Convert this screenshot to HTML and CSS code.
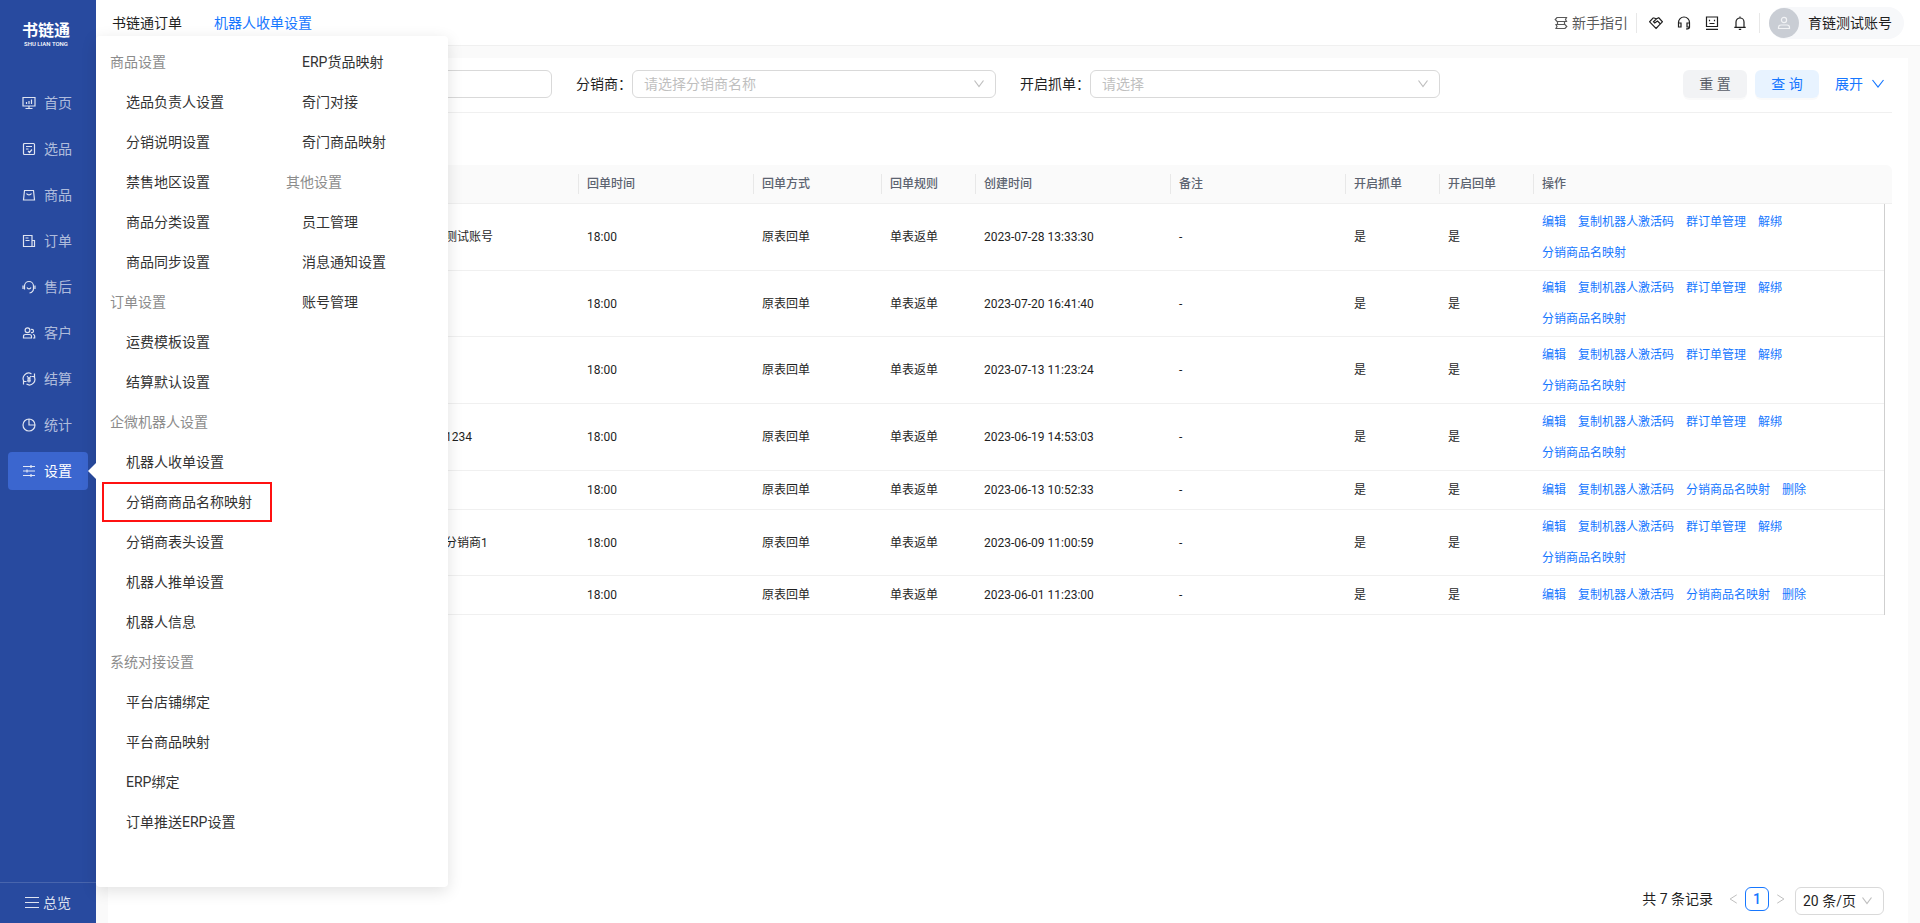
FILE: index.html
```html
<!DOCTYPE html>
<html lang="zh-CN">
<head>
<meta charset="utf-8">
<title>机器人收单设置</title>
<link rel="stylesheet" href="styles.css">
</head>
<body>
<div class="app">
  <aside class="sidebar">
    <div class="logo">
      <span class="logo-name">书链通</span>
      <span class="logo-sub">SHU LIAN TONG</span>
    </div>
    <nav class="side-nav">
      <a class="side-item" href="#"><svg class="icon" viewBox="0 0 14 14"><path d="M1 1.500h12v8.500H1zM3.500 12.500h7M7 10v2.500M4.500 8V6M7 8V5M9.500 8V3.500"/></svg>首页</a>
      <a class="side-item" href="#"><svg class="icon" viewBox="0 0 14 14"><rect x="1.500" y="1.500" width="11" height="11" rx="1"/><path d="M4 4.500h6M4 7h2.500M6 9l1.500 1.500L10 7.500"/></svg>选品</a>
      <a class="side-item" href="#"><svg class="icon" viewBox="0 0 14 14"><path d="M2.500 2.500h9l1 9.500h-11zM4.500 5.500c1 1.800 4 1.800 5 0"/></svg>商品</a>
      <a class="side-item" href="#"><svg class="icon" viewBox="0 0 14 14"><path d="M1.500 1.500h8.500v11H1.500zM10 6.500h2.500v6H10M3.500 4h3M3.500 6.500h4"/></svg>订单</a>
      <a class="side-item" href="#"><svg class="icon" viewBox="0 0 14 14"><path d="M2.500 9.500V6a4.500 4.500 0 0 1 9 0v2.500c0 2.500-1.500 4-4 4.500M1 5.500v3.500M13 5.500v3.500M5 7.500c.8 1.700 3.200 1.700 4 0"/></svg>售后</a>
      <a class="side-item" href="#"><svg class="icon" viewBox="0 0 14 14"><circle cx="5.500" cy="4.200" r="2.400"/><path d="M1.500 12V10.500q0-2 2-2h4q2 0 2 2V12zM9 3.500a1.700 1.700 0 1 1 0 3M11 8.500q1.700 0 1.700 2V12H11"/></svg>客户</a>
      <a class="side-item" href="#"><svg class="icon" viewBox="0 0 14 14"><path d="M9.500 1.900A5.500 5.500 0 0 0 2.200 9.800M4.500 12.100A5.500 5.500 0 0 0 11.800 4.200M12.500 1.500v3h-3M1.500 12.500v-3h3M5 4l2 2.500L9 4M7 6.500V10.500M5 7h4M5 8.800h4"/></svg>结算</a>
      <a class="side-item" href="#"><svg class="icon" viewBox="0 0 14 14"><circle cx="7" cy="7" r="6"/><path d="M7 1v6h6"/></svg>统计</a>
      <a class="side-item active" href="#"><svg class="icon" viewBox="0 0 14 14"><path d="M1 2.500h12M1 7h12M1 11.500h12M9 1v3M5 5.500v3M9 10v3"/></svg>设置</a>
    </nav>
    <a class="overview" href="#"><svg class="icon" viewBox="0 0 14 14"><path d="M0 1.500h14M0 6.500h14M0 11.500h14"/></svg>总览</a>
  </aside>

  <div class="page">
    <header class="topbar">
      <nav class="tabs">
        <a class="tab" href="#">书链通订单</a>
        <a class="tab current" href="#">机器人收单设置</a>
      </nav>
      <div class="tools">
        <a class="guide" href="#"><svg class="icon" viewBox="0 0 14 14"><path d="M3 1.500h9.500L11.500 3.500l1 2H3L1.200 3.500zM2 8.500h9l1.800 2-1.800 2H2l1-2zM3.500 5.500v3M10.500 5.500v3"/></svg>新手指引</a>
        <div class="tool-icons">
          <button class="tool" aria-label="合作"><svg class="icon" viewBox="0 0 14 14"><path d="M4.200 1.800.6 5.800 7 12.500l6.400-6.700L9.800 1.800 7.500 2.800 4.500 5.800l1.200 1.200L8.500 5l3 3M4.200 1.800l3 1M7 12.500l2.500-2.700"/></svg></button>
          <button class="tool" aria-label="客服"><svg class="icon" viewBox="0 0 14 14"><path d="M1.500 10V6.500a5.500 5.500 0 0 1 11 0V10M1.500 7h2.500v4H1.500zM10 7h2.500v4H10zM12.500 11q0 2-3.500 2"/></svg></button>
          <button class="tool" aria-label="反馈"><svg class="icon" viewBox="0 0 14 14"><path d="M1.500 1h11v9.500h-11zM1 13.300h12M4.500 3.800v1.500M9.500 3.800v1.500M4.500 7.500h5"/></svg></button>
          <button class="tool" aria-label="通知"><svg class="icon" viewBox="0 0 14 14"><path d="M3 11V6a4 4 0 0 1 8 0v5M1.300 11.300h11.400M7 .5V2M5.800 13.300h2.400"/></svg></button>
        </div>
        <button class="account"><span class="avatar"><svg class="icon" viewBox="0 0 14 14"><circle cx="7" cy="4" r="2.600"/><path d="M1.500 12.500v-1q0-2.500 2.500-2.500h6q2.500 0 2.500 2.500v1z"/></svg></span>育链测试账号</button>
      </div>
    </header>

    <main class="card">
      <form class="filters">
        <div class="field"><input class="box" type="text" aria-label="名称"></div>
        <div class="field">
          <label for="dealer">分销商：</label>
          <div class="select-wrap"><select class="box" id="dealer"><option>请选择分销商名称</option></select><svg class="icon chevron" viewBox="0 0 12 12"><path d="M1.500 2.500 6 8.500l4.500-6"/></svg></div>
        </div>
        <div class="field">
          <label for="grab">开启抓单：</label>
          <div class="select-wrap"><select class="box" id="grab"><option>请选择</option></select><svg class="icon chevron" viewBox="0 0 12 12"><path d="M1.500 2.500 6 8.500l4.500-6"/></svg></div>
        </div>
        <div class="actions">
          <button class="btn" type="reset">重 置</button>
          <button class="btn primary" type="button">查 询</button>
          <button class="expand" type="button">展开<svg class="icon" viewBox="0 0 12 12"><path d="M.5 2 6 9l5.500-7"/></svg></button>
        </div>
      </form>

      <table class="orders">
        <colgroup>
          <col class="c-lead"><col class="c-name"><col class="c-wide"><col class="c-mode"><col class="c-flag"><col class="c-date"><col class="c-wide"><col class="c-flag"><col class="c-flag"><col><col class="c-gutter">
        </colgroup>
        <thead>
          <tr><th></th><th></th><th>回单时间</th><th>回单方式</th><th>回单规则</th><th>创建时间</th><th>备注</th><th>开启抓单</th><th>开启回单</th><th>操作</th><th></th></tr>
        </thead>
        <tbody>
          <tr><td></td><td>育链测试账号</td><td>18:00</td><td>原表回单</td><td>单表返单</td><td>2023-07-28 13:33:30</td><td>-</td><td>是</td><td>是</td><td><div class="links"><a href="#">编辑</a><a href="#">复制机器人激活码</a><a href="#">群订单管理</a><a href="#">解绑</a><a href="#">分销商品名映射</a></div></td><td></td></tr>
          <tr><td></td><td></td><td>18:00</td><td>原表回单</td><td>单表返单</td><td>2023-07-20 16:41:40</td><td>-</td><td>是</td><td>是</td><td><div class="links"><a href="#">编辑</a><a href="#">复制机器人激活码</a><a href="#">群订单管理</a><a href="#">解绑</a><a href="#">分销商品名映射</a></div></td><td></td></tr>
          <tr><td></td><td></td><td>18:00</td><td>原表回单</td><td>单表返单</td><td>2023-07-13 11:23:24</td><td>-</td><td>是</td><td>是</td><td><div class="links"><a href="#">编辑</a><a href="#">复制机器人激活码</a><a href="#">群订单管理</a><a href="#">解绑</a><a href="#">分销商品名映射</a></div></td><td></td></tr>
          <tr><td></td><td>测试1234</td><td>18:00</td><td>原表回单</td><td>单表返单</td><td>2023-06-19 14:53:03</td><td>-</td><td>是</td><td>是</td><td><div class="links"><a href="#">编辑</a><a href="#">复制机器人激活码</a><a href="#">群订单管理</a><a href="#">解绑</a><a href="#">分销商品名映射</a></div></td><td></td></tr>
          <tr class="short"><td></td><td></td><td>18:00</td><td>原表回单</td><td>单表返单</td><td>2023-06-13 10:52:33</td><td>-</td><td>是</td><td>是</td><td><div class="links"><a href="#">编辑</a><a href="#">复制机器人激活码</a><a href="#">分销商品名映射</a><a href="#">删除</a></div></td><td></td></tr>
          <tr><td></td><td>测试分销商1</td><td>18:00</td><td>原表回单</td><td>单表返单</td><td>2023-06-09 11:00:59</td><td>-</td><td>是</td><td>是</td><td><div class="links"><a href="#">编辑</a><a href="#">复制机器人激活码</a><a href="#">群订单管理</a><a href="#">解绑</a><a href="#">分销商品名映射</a></div></td><td></td></tr>
          <tr class="short"><td></td><td></td><td>18:00</td><td>原表回单</td><td>单表返单</td><td>2023-06-01 11:23:00</td><td>-</td><td>是</td><td>是</td><td><div class="links"><a href="#">编辑</a><a href="#">复制机器人激活码</a><a href="#">分销商品名映射</a><a href="#">删除</a></div></td><td></td></tr>
        </tbody>
      </table>

      <footer class="pager">
        <span class="total">共 7 条记录</span>
        <button class="step" aria-label="上一页"><svg class="icon" viewBox="0 0 12 12"><path d="M10.500 1 2.500 6l8 5"/></svg></button>
        <button class="page-no">1</button>
        <button class="step" aria-label="下一页"><svg class="icon" viewBox="0 0 12 12"><path d="m1.500 1 8 5-8 5"/></svg></button>
        <div class="select-wrap size"><select class="box" aria-label="每页条数"><option>20 条/页</option></select><svg class="icon chevron" viewBox="0 0 12 12"><path d="M1.500 2.500 6 8.500l4.500-6"/></svg></div>
      </footer>
    </main>
  </div>

  <div class="flyout">
    <ul class="menu">
      <li class="group">商品设置</li>
      <li><a href="#">选品负责人设置</a></li>
      <li><a href="#">分销说明设置</a></li>
      <li><a href="#">禁售地区设置</a></li>
      <li><a href="#">商品分类设置</a></li>
      <li><a href="#">商品同步设置</a></li>
      <li class="group">订单设置</li>
      <li><a href="#">运费模板设置</a></li>
      <li><a href="#">结算默认设置</a></li>
      <li class="group">企微机器人设置</li>
      <li><a href="#">机器人收单设置</a></li>
      <li class="marked"><a href="#">分销商商品名称映射</a></li>
      <li><a href="#">分销商表头设置</a></li>
      <li><a href="#">机器人推单设置</a></li>
      <li><a href="#">机器人信息</a></li>
      <li class="group">系统对接设置</li>
      <li><a href="#">平台店铺绑定</a></li>
      <li><a href="#">平台商品映射</a></li>
      <li><a href="#">ERP绑定</a></li>
      <li><a href="#">订单推送ERP设置</a></li>
    </ul>
    <ul class="menu">
      <li><a href="#">ERP货品映射</a></li>
      <li><a href="#">奇门对接</a></li>
      <li><a href="#">奇门商品映射</a></li>
      <li class="group">其他设置</li>
      <li><a href="#">员工管理</a></li>
      <li><a href="#">消息通知设置</a></li>
      <li><a href="#">账号管理</a></li>
    </ul>
  </div>
</div>
</body>
</html>
```
FILE: styles.css
```css
* { box-sizing: border-box; }

body {
  margin: 0;
  background: #fafafa;
  color: #1f1f1f;
  font: 14px/20px Roboto, "Noto Sans CJK SC", sans-serif;
}

a { color: inherit; text-decoration: none; }

button, input, select { font: inherit; color: inherit; }

button { border: 0; padding: 0; background: none; cursor: pointer; }

.icon {
  width: 14px;
  height: 14px;
  flex: none;
  fill: none;
  stroke: currentColor;
  stroke-width: 1.2;
}

.app { position: relative; display: flex; min-height: 100vh; }

/* Sidebar */
.sidebar {
  width: 96px;
  flex: none;
  display: flex;
  flex-direction: column;
  background: #284a9f;
  color: #fff;
}

.logo {
  height: 84px;
  padding: 21px 4px 0 0;
  display: flex;
  flex-direction: column;
  align-items: center;
}

.logo-name { font-size: 16px; font-weight: 700; line-height: 20px; }
.logo-sub { font-size: 6px; font-weight: 500; line-height: 6px; }

.side-nav { display: flex; flex-direction: column; gap: 8px; padding: 0 8px; }

.side-item {
  height: 38px;
  padding-left: 14px;
  display: flex;
  align-items: center;
  gap: 8px;
  border-radius: 4px;
  color: rgba(255, 255, 255, 0.65);
}

.side-item .icon { color: rgba(255, 255, 255, 0.85); }

.side-item.active { position: relative; background: #3b66cf; color: #fff; }

.side-item.active::after {
  content: "";
  position: absolute;
  z-index: 3;
  right: -8px;
  top: 11px;
  border: 8px solid transparent;
  border-left-width: 0;
  border-right-color: #fff;
}

.overview {
  height: 41px;
  margin-top: auto;
  padding-left: 25px;
  display: flex;
  align-items: center;
  gap: 4px;
  border-top: 1px solid rgba(255, 255, 255, 0.15);
  color: rgba(255, 255, 255, 0.85);
}

/* Header */
.page { flex: 1; min-width: 0; display: flex; flex-direction: column; }

.topbar {
  height: 46px;
  padding: 0 16px;
  display: flex;
  align-items: center;
  justify-content: space-between;
  border-bottom: 1px solid #f0f0f0;
  background: #fff;
}

.tabs { display: flex; gap: 32px; }
.current { color: #1677ff; }

.tools { display: flex; align-items: center; }
.guide { display: flex; align-items: center; gap: 4px; padding-right: 8px; color: #595959; }

.tool-icons {
  height: 20px;
  padding: 0 12px;
  display: flex;
  align-items: center;
  gap: 14px;
  border: solid #e8e8e8;
  border-width: 0 1px;
}

.tool { display: flex; }

.account {
  height: 32px;
  margin-left: 9px;
  padding-right: 12px;
  display: flex;
  align-items: center;
  gap: 9px;
  border-radius: 16px;
  background: #f7f8fa;
}

.avatar {
  width: 30px;
  height: 30px;
  display: flex;
  align-items: center;
  justify-content: center;
  border-radius: 50%;
  background: #c9cdd4;
  color: #f2f3f5;
}

/* Content */
.card {
  flex: 1;
  margin: 12px 12px 0;
  padding: 12px 16px 8px;
  display: flex;
  flex-direction: column;
  background: #fff;
}

.filters {
  padding: 0 8px 14px;
  display: grid;
  grid-template-columns: repeat(4, minmax(0, 1fr));
  gap: 24px;
  border-bottom: 1px solid #f0f0f0;
}

.field { display: flex; align-items: center; white-space: nowrap; }

.box {
  width: 100%;
  height: 28px;
  padding: 0 11px;
  border: 1px solid #d9d9d9;
  border-radius: 6px;
  background: #fff;
  appearance: none;
}

.select-wrap { position: relative; display: flex; flex: 1; }
.field select { color: #bfbfbf; }

.chevron {
  position: absolute;
  right: 11px;
  top: 8px;
  width: 12px;
  height: 12px;
  color: #bfbfbf;
  pointer-events: none;
}

.actions { display: flex; justify-content: flex-end; gap: 8px; }

.btn {
  width: 64px;
  height: 28px;
  border-radius: 6px;
  background: #f2f3f5;
  color: #595e68;
  box-shadow: 0 2px 0 rgba(0, 0, 0, 0.02);
}

.primary { background: #e8f3ff; color: #1677ff; }

.expand { display: flex; align-items: center; gap: 9px; margin-left: 8px; color: #1677ff; }
.expand .icon { width: 12px; height: 12px; }

/* Table */
.orders {
  width: 100%;
  margin-top: 52px;
  table-layout: fixed;
  border-collapse: separate;
  border-spacing: 0;
  font-size: 12px;
}

.c-lead { width: 289px; }
.c-name { width: 166px; }
.c-wide { width: 175px; }
.c-mode { width: 128px; }
.c-flag { width: 94px; }
.c-date { width: 195px; }
.c-gutter { width: 8px; }

th, td { padding: 0 8px; border-bottom: 1px solid #f0f0f0; text-align: left; }

th {
  position: relative;
  height: 39px;
  background: #fafafa;
  color: #5c6370;
  font-weight: 500;
}

th:not(:nth-last-child(-n+2))::after {
  content: "";
  position: absolute;
  right: 0;
  top: 9px;
  width: 1px;
  height: 20px;
  background: #e8e8e8;
}

th:first-child { border-top-left-radius: 6px; }
th:last-child { border-top-right-radius: 6px; }

tbody tr { height: 67px; }
tbody tr:nth-child(4n+2) { height: 66px; }
tbody .short { height: 39px; }

th:last-child, td:last-child { padding: 0; }
td:last-child { border-bottom: 0; border-left: 1px solid #cfcfcf; }

.links { display: flex; flex-wrap: wrap; gap: 11px 12px; color: #1677ff; }

/* Pagination */
.pager {
  margin-top: auto;
  padding-right: 8px;
  display: flex;
  justify-content: flex-end;
  align-items: flex-start;
  line-height: 24px;
}

.total { margin-right: 8px; }

.step {
  width: 24px;
  height: 24px;
  display: flex;
  align-items: center;
  justify-content: center;
  color: #bfbfbf;
}

.step .icon { width: 10px; height: 10px; }

.page-no {
  width: 24px;
  height: 24px;
  line-height: 22px;
  border: 1px solid #1677ff;
  border-radius: 6px;
  color: #1677ff;
  font-weight: 500;
}

.size { flex: none; width: 89px; margin-left: 2px; }
.size .box { padding: 0 7px; }

/* Settings flyout, laid over the page beside the sidebar */
.flyout {
  position: absolute;
  z-index: 2;
  left: 96px;
  top: 36px;
  bottom: 36px;
  width: 352px;
  padding-top: 6px;
  display: grid;
  grid-template-columns: 1fr 1fr;
  border-radius: 4px;
  background: #fff;
  box-shadow: 0 4px 16px rgba(0, 0, 0, 0.12);
  color: #333;
}

.menu { margin: 0; padding: 0; list-style: none; }
.menu li { height: 40px; padding-left: 30px; line-height: 40px; }
.menu .group { padding-left: 14px; color: #8c8c8c; }

.marked { position: relative; }

.marked::after {
  content: "";
  position: absolute;
  inset: 0 0 0 6px;
  border: 2px solid #f11;
}
```
